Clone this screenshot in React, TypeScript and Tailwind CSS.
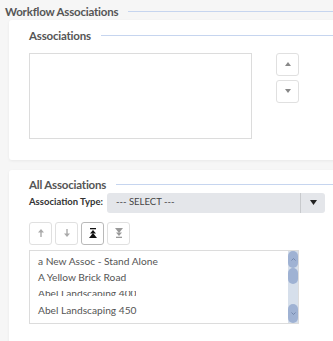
import React from 'react';

const font = { fontFamily: 'Lato, "Noto Sans", sans-serif' };

const Heading: React.FC<{ title: string }> = ({ title }) => (
  <div className="flex items-center gap-[10px]">
    <span className="text-[11.5px] font-bold text-[#555] whitespace-nowrap leading-none tracking-[-0.2px]">
      {title}
    </span>
    <div className="flex-1 h-px bg-[#c6d5ef]" />
  </div>
);

const Tri: React.FC<{ down?: boolean }> = ({ down }) => (
  <svg width="6" height="4" viewBox="0 0 6 4" className={down ? 'rotate-180' : ''}>
    <path d="M3 0 L6 4 L0 4 Z" fill="#888" />
  </svg>
);

const SmallBtn: React.FC<{ children: React.ReactNode; active?: boolean }> = ({ children, active }) => (
  <div
    className={`w-[23px] h-[23px] rounded-[3px] border bg-white flex items-center justify-center ${
      active ? 'border-[#b9b9b9]' : 'border-[#e0e0e0]'
    }`}
  >
    {children}
  </div>
);

const items = ['a New Assoc - Stand Alone', 'A Yellow Brick Road'];

export default function App() {
  return (
    <div className="w-[333px] h-[341px] overflow-hidden bg-[#f6f6f6]" style={font}>
      {/* page title */}
      <div className="pl-[5px] pt-[6px] h-[20px]">
        <Heading title="Workflow Associations" />
      </div>

      {/* associations card */}
      <div className="ml-[9px] w-[340px] h-[140px] bg-white rounded-[3px] shadow-[0_1px_3px_rgba(0,0,0,0.06)] pl-[20px] pt-[10px]">
        <Heading title="Associations" />
        <div className="flex mt-[11px] gap-[24px]">
          <div className="w-[223px] h-[86px] border border-[#dcdcdc] bg-white" />
          <div className="flex flex-col gap-[4px]">
            <SmallBtn>
              <Tri />
            </SmallBtn>
            <SmallBtn>
              <Tri down />
            </SmallBtn>
          </div>
        </div>
      </div>

      {/* all associations card */}
      <div className="ml-[9px] mt-[10px] w-[340px] h-[200px] bg-white rounded-[3px] shadow-[0_1px_3px_rgba(0,0,0,0.06)] pl-[20px] pt-[9px]">
        <Heading title="All Associations" />
        <div className="flex items-center mt-[2px] gap-[4px] w-[296px]">
          <span className="shrink-0 text-[9.5px] font-bold text-[#333] whitespace-nowrap">Association Type:</span>
          <div className="flex-1 h-[20px] bg-[#e4e6ea] rounded-[3px] flex items-center">
            <span className="flex-1 pl-[9px] text-[9.5px] text-[#444]">--- SELECT ---</span>
            <div className="w-px h-full bg-[#c8cacd]" />
            <div className="w-[24px] flex items-center justify-center">
              <svg width="7" height="5" viewBox="0 0 7 5">
                <path d="M0 0 L7 0 L3.5 5 Z" fill="#222" />
              </svg>
            </div>
          </div>
        </div>

        <div className="flex gap-[3px] mt-[9px]">
          <SmallBtn>
            <svg width="6" height="8" viewBox="0 0 6 8">
              <path d="M3 0 L6 3.5 L3.7 3.5 L3.7 8 L2.3 8 L2.3 3.5 L0 3.5 Z" fill="#aaa" />
            </svg>
          </SmallBtn>
          <SmallBtn>
            <svg width="6" height="8" viewBox="0 0 6 8">
              <path d="M3 8 L6 4.5 L3.7 4.5 L3.7 0 L2.3 0 L2.3 4.5 L0 4.5 Z" fill="#aaa" />
            </svg>
          </SmallBtn>
          <SmallBtn active>
            <svg width="8" height="10" viewBox="0 0 8 10">
              <rect x="1" y="0" width="6" height="1.3" fill="#111" />
              <path d="M4 2 L7 5.5 L1 5.5 Z" fill="#111" />
              <path d="M4 5 L8 10 L0 10 Z" fill="#111" />
            </svg>
          </SmallBtn>
          <SmallBtn>
            <svg width="8" height="10" viewBox="0 0 8 10">
              <path d="M4 5 L8 0 L0 0 Z" fill="#999" />
              <path d="M4 8 L7 4.5 L1 4.5 Z" fill="#999" />
              <rect x="1" y="8.7" width="6" height="1.3" fill="#999" />
            </svg>
          </SmallBtn>
        </div>

        <div className="mt-[5px] w-[270px] h-[74px] border border-[#dcdcdc] flex overflow-hidden">
          <div className="flex-1 pl-[8px] pt-[2px] text-[10.2px] text-[#555] leading-none">
            {items.map((t) => (
              <div key={t} className="h-[16.5px] flex items-center whitespace-nowrap">
                {t}
              </div>
            ))}
            <div className="h-[16.5px] flex items-center">
              <div className="h-[5px] overflow-hidden">
                <div className="-mt-[3px] whitespace-nowrap">Abel Landscaping 400</div>
              </div>
            </div>
            <div className="h-[16.5px] flex items-center whitespace-nowrap">Abel Landscaping 450</div>
            <div className="h-[16.5px] flex items-center whitespace-nowrap">Abilene</div>
          </div>
          {/* scrollbar */}
          <div className="w-[10px] bg-[#d6dfeb] flex flex-col items-center">
            <div className="w-[10px] h-[17px] shrink-0 rounded-full bg-[#9fb2d3] flex items-center justify-center">
              <svg width="5" height="3" viewBox="0 0 5 3">
                <path d="M0.5 2.5 L2.5 0.5 L4.5 2.5" stroke="#6b7fa3" strokeWidth="0.8" fill="none" />
              </svg>
            </div>
            <div className="w-[10px] h-[16px] shrink-0 rounded-full bg-[#9fb2d3]" />
            <div className="flex-1" />
            <div className="w-[10px] h-[19px] shrink-0 rounded-full bg-[#9fb2d3] flex items-center justify-center">
              <svg width="5" height="3" viewBox="0 0 5 3">
                <path d="M0.5 0.5 L2.5 2.5 L4.5 0.5" stroke="#6b7fa3" strokeWidth="0.8" fill="none" />
              </svg>
            </div>
          </div>
        </div>
      </div>
    </div>
  );
}
